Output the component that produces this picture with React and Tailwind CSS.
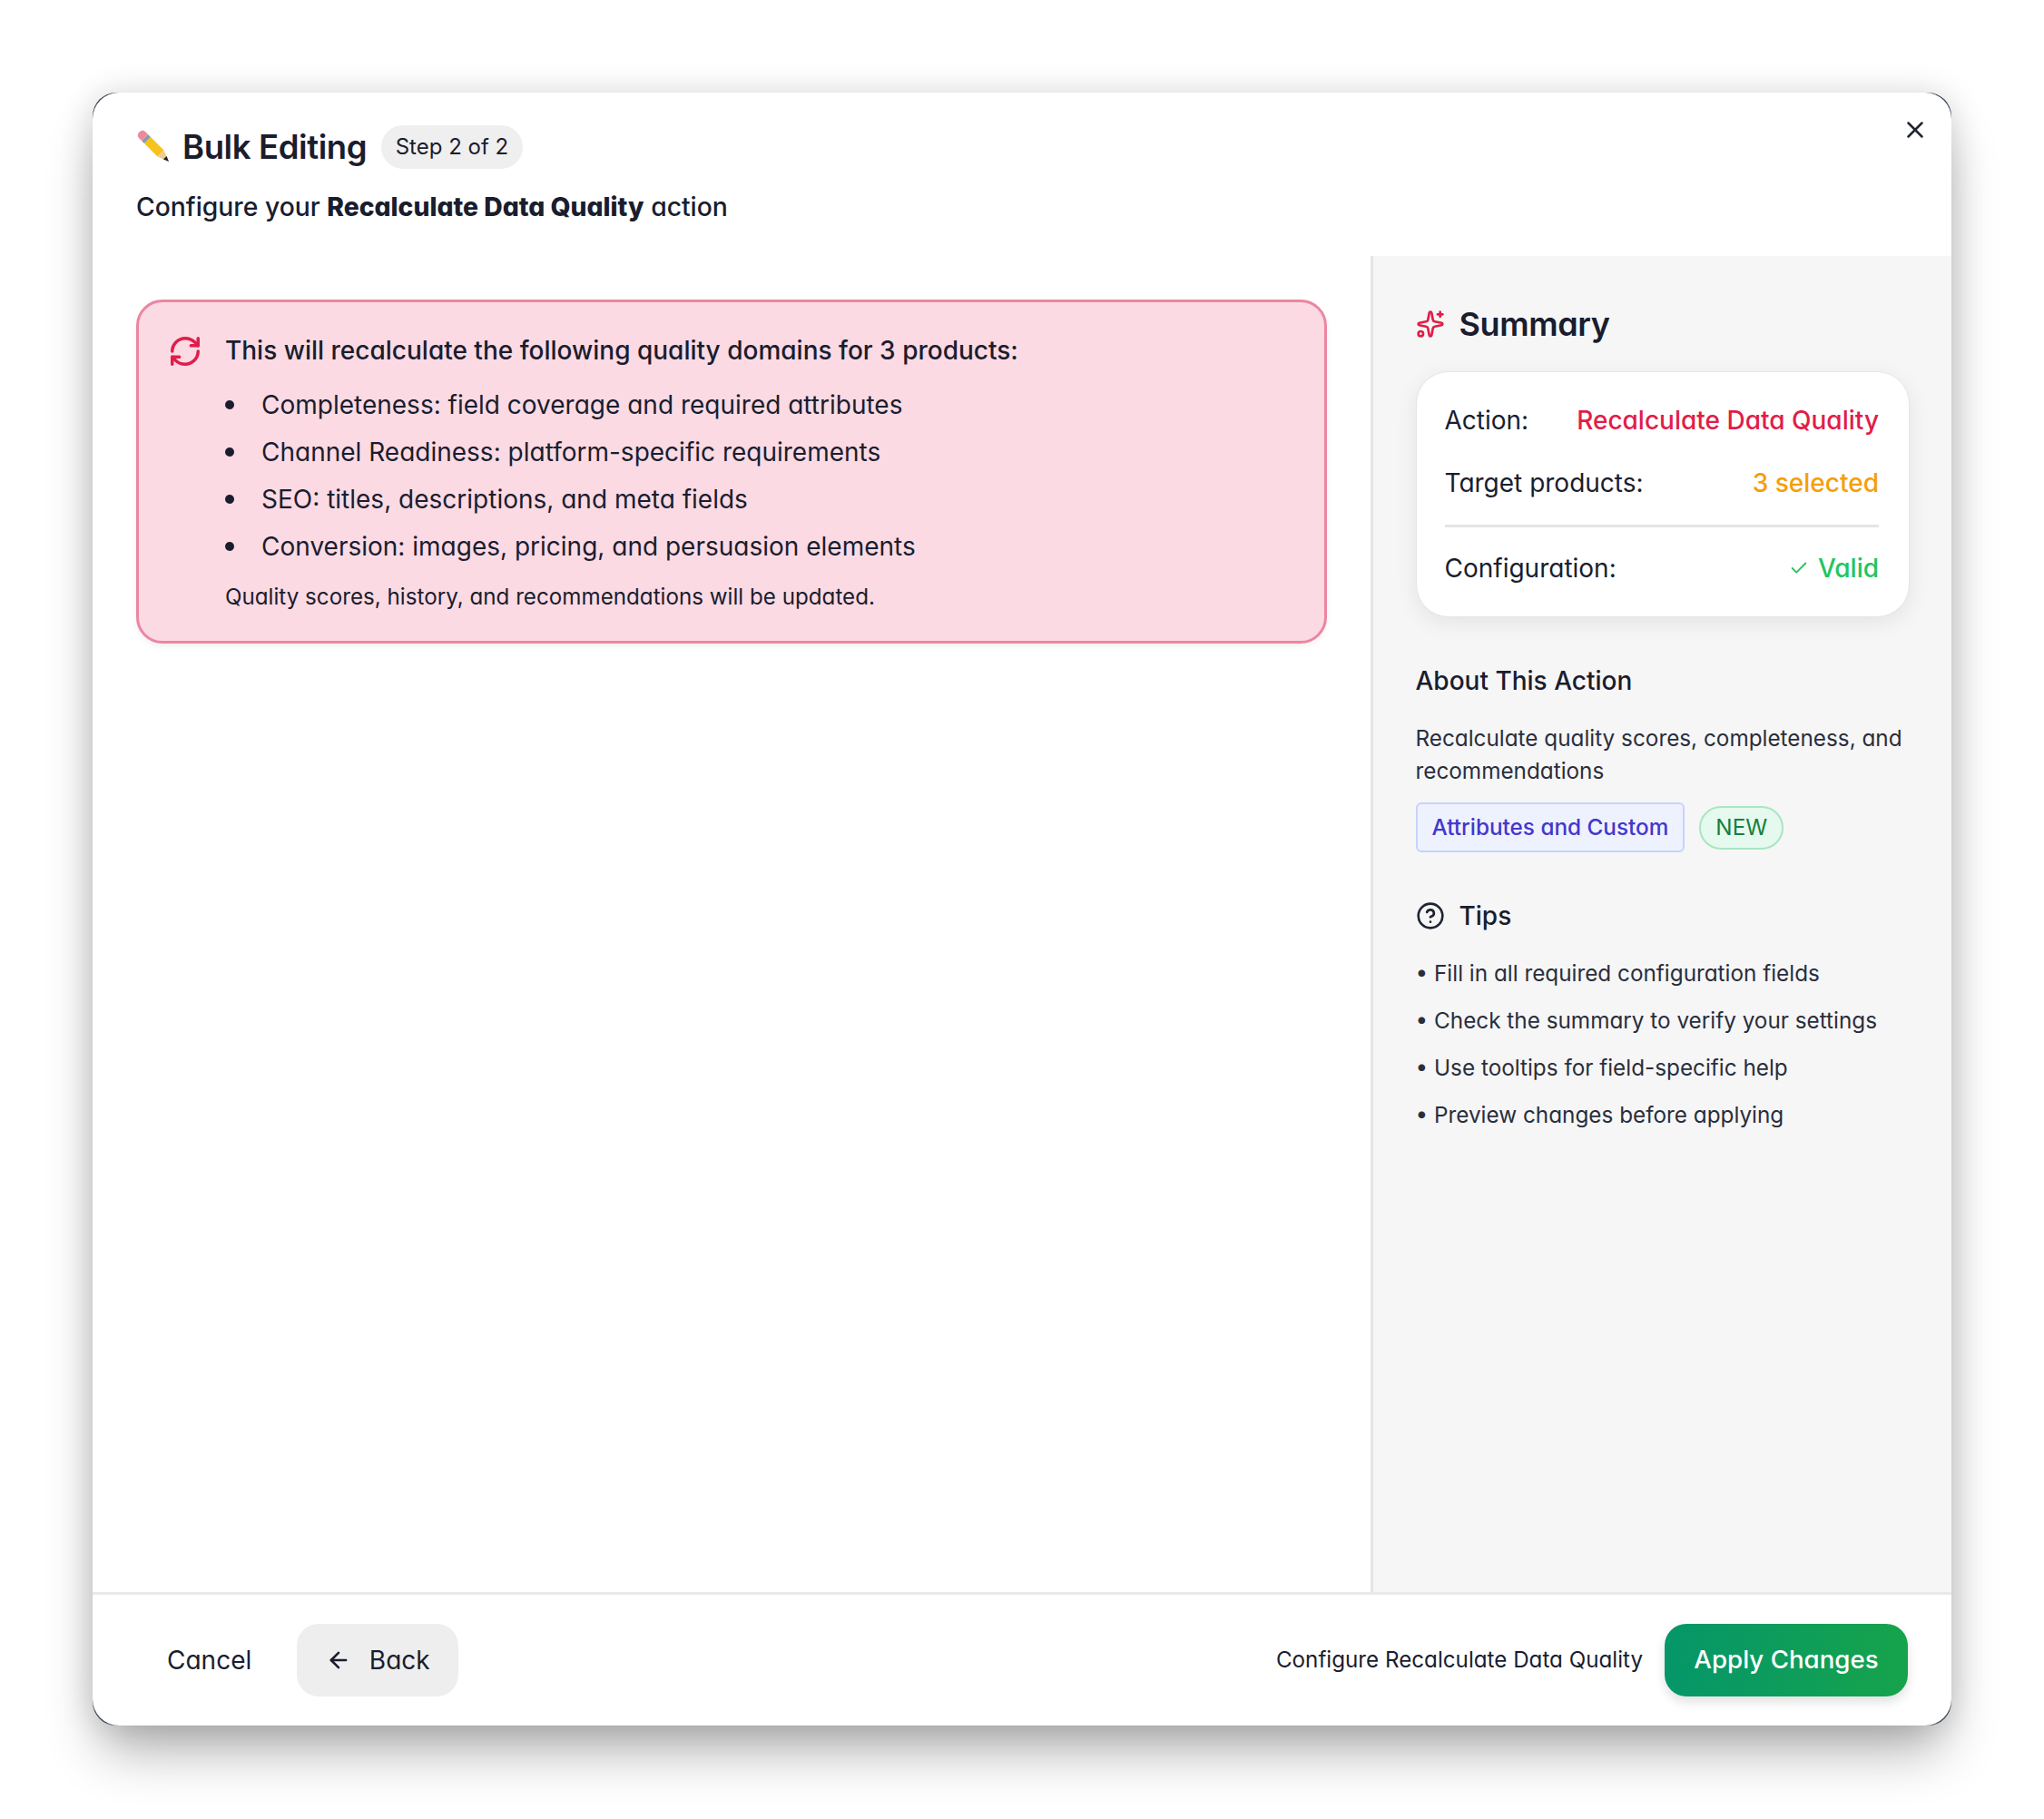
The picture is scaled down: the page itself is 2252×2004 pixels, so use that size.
import React from 'react';
import { ArrowLeft, Check, CircleHelp, RefreshCw, Sparkles, X } from 'lucide-react';

const domains = [
  'Completeness: field coverage and required attributes',
  'Channel Readiness: platform-specific requirements',
  'SEO: titles, descriptions, and meta fields',
  'Conversion: images, pricing, and persuasion elements',
];

const tips = [
  'Fill in all required configuration fields',
  'Check the summary to verify your settings',
  'Use tooltips for field-specific help',
  'Preview changes before applying',
];

function PencilIcon() {
  return (
    <svg viewBox="0 0 37 37" className="w-[37px] h-[37px] shrink-0 -mt-[3px]">
      <path d="M16 9 L30.500 23.500 L23.500 30.500 L9 16 Z" fill="#f8c21c" />
      <path d="M12 19 L26.500 33.500 L23.500 30.500 L9 16 Z" fill="#e39c10" />
      <path d="M30.500 23.500 L23.500 30.500 L36 36 Z" fill="#eccb94" />
      <path d="M33.500 30 L30 33.500 L36 36 Z" fill="#1f1f1f" />
      <path d="M13 6 L16 9 L9 16 L6 13 Z" fill="#8d99ad" />
      <path d="M13 6 L6 13 L3 10 C1 8 1.500 5.500 3.500 3.500 C5.500 1.500 8 1 10 3 Z" fill="#ec8a9b" />
    </svg>
  );
}

export default function App() {
  return (
    <div className="min-h-screen bg-white pt-[102px] pl-[102px] font-['Inter',sans-serif] [font-feature-settings:'cv11'] text-[#1a1d2e]">
      <div className="w-[2048px] h-[1799px] rounded-[26px] bg-[#3c4456] shadow-[0_36px_60px_-10px_rgba(0,0,0,0.32),0_0_36px_rgba(0,0,0,0.14)]">
        <div className="w-full h-full rounded-[29px] bg-white flex flex-col overflow-hidden relative">
          <button className="absolute top-[26px] right-[25px] text-[#1f2433]">
            <X size={30} strokeWidth={2} />
          </button>

          <header className="h-[180px] shrink-0 pl-[48px] pt-[36px]">
            <div className="flex items-center h-[48px]">
              <PencilIcon />
              <h1 className="ml-[14px] text-[36.500px] leading-[48px] font-semibold tracking-[-0.4px]">Bulk Editing</h1>
              <span className="ml-[16px] h-[48px] px-[15.500px] rounded-full bg-[#efeff0] text-[24px] flex items-center">Step 2 of 2</span>
            </div>
            <p className="mt-[24px] text-[28.300px] leading-[36px] font-medium">
              Configure your <strong className="font-extrabold">Recalculate Data Quality</strong> action
            </p>
          </header>

          <div className="flex-1 flex min-h-0">
            <main className="flex-1 pl-[48px] pr-[48px] pt-[48px]">
              <div className="w-[1312px] h-[379px] rounded-[29px] border-[3px] border-[#ec86a2] bg-[#fbdae4] flex pl-[32px] pt-[35px] shadow-[0_3px_6px_rgba(0,0,0,0.06)]">
                <RefreshCw size={38} strokeWidth={2.2} className="text-[#e11d48] shrink-0" />
                <div className="ml-[25px]">
                  <p className="text-[28px] leading-[36px] font-medium">This will recalculate the following quality domains for 3 products:</p>
                  <ul className="mt-[24px] flex flex-col gap-[16px] text-[28px] leading-[36px]">
                    {domains.map((d) => (
                      <li key={d} className="flex items-center gap-[30px]">
                        <span className="w-[10px] h-[10px] rounded-full bg-[#1a1d2e] shrink-0" />
                        {d}
                      </li>
                    ))}
                  </ul>
                  <p className="mt-[20px] text-[24.200px] leading-[36px]">Quality scores, history, and recommendations will be updated.</p>
                </div>
              </div>
            </main>

            <aside className="w-[640px] shrink-0 border-l-[3px] border-[#e5e5e6] bg-[#f6f6f6] pl-[46.500px] pr-[48px] pt-[52px]">
              <div className="flex items-center h-[46px]">
                <Sparkles size={32} strokeWidth={2} className="text-[#e11d48]" />
                <h2 className="ml-[16px] text-[36px] font-semibold tracking-[-0.4px]">Summary</h2>
              </div>

              <div className="mt-[29px] w-[544px] h-[271px] rounded-[36px] bg-white pl-[31px] pr-[32.500px] pt-[35px] shadow-[0_6px_24px_rgba(0,0,0,0.08)] border border-[#e6e6e7] text-[28px] leading-[36px]">
                <div className="flex justify-between">
                  <span>Action:</span>
                  <span className="font-medium text-[#e11d48]">Recalculate Data Quality</span>
                </div>
                <div className="flex justify-between mt-[33px]">
                  <span>Target products:</span>
                  <span className="font-medium text-[#f59e0b]">3 selected</span>
                </div>
                <div className="mt-[28px] border-t-[3px] border-[#e5e5e6]" />
                <div className="flex justify-between mt-[27px]">
                  <span>Configuration:</span>
                  <span className="font-medium text-[#22c55e] flex items-center gap-[10px]">
                    <Check size={22} strokeWidth={2} />
                    Valid
                  </span>
                </div>
              </div>

              <h3 className="mt-[52px] text-[28px] leading-[36px] font-medium">About This Action</h3>
              <p className="mt-[27px] text-[24.300px] leading-[36px] text-[#2a2e3d]">
                Recalculate quality scores, completeness, and recommendations
              </p>
              <div className="mt-[17px] flex items-center gap-[16px]">
                <span className="h-[55px] px-[16px] rounded-[6px] border-[2px] border-[#c7d2fe] bg-[#eef2ff] text-[#4338ca] text-[24.300px] font-medium flex items-center">Attributes and Custom</span>
                <span className="h-[48px] px-[16px] rounded-full border-[2px] border-[#a9e6c2] bg-[#e6f9ee] text-[#15803d] text-[24.300px] flex items-center">NEW</span>
              </div>

              <div className="mt-[52px] flex items-center h-[36px]">
                <CircleHelp size={32} strokeWidth={2} className="text-[#1f2433]" />
                <h3 className="ml-[16px] text-[28px] font-medium">Tips</h3>
              </div>
              <ul className="mt-[27px] flex flex-col gap-[16px] text-[24.300px] leading-[36px] text-[#2a2e3d]">
                {tips.map((t) => (
                  <li key={t}>• {t}</li>
                ))}
              </ul>
            </aside>
          </div>

          <footer className="h-[147px] shrink-0 border-t-[3px] border-[#e9e9ea] flex items-center justify-between pl-[48px] pr-[48px]">
            <div className="flex items-center gap-[16px]">
              <button className="h-[80px] px-[34px] text-[28px] rounded-[24px]">Cancel</button>
              <button className="h-[80px] w-[178px] rounded-[24px] bg-[#eeeeef] text-[28px] flex items-center justify-center gap-[20px]">
                <ArrowLeft size={28} strokeWidth={2.2} />
                Back
              </button>
            </div>
            <div className="flex items-center gap-[24px]">
              <span className="text-[24.200px]">Configure Recalculate Data Quality</span>
              <button className="h-[80px] w-[268px] rounded-[24px] bg-gradient-to-r from-[#059669] to-[#16a34a] text-white text-[27.700px] font-medium shadow-[0_6px_12px_rgba(0,0,0,0.12)]">Apply Changes</button>
            </div>
          </footer>
        </div>
      </div>
    </div>
  );
}
